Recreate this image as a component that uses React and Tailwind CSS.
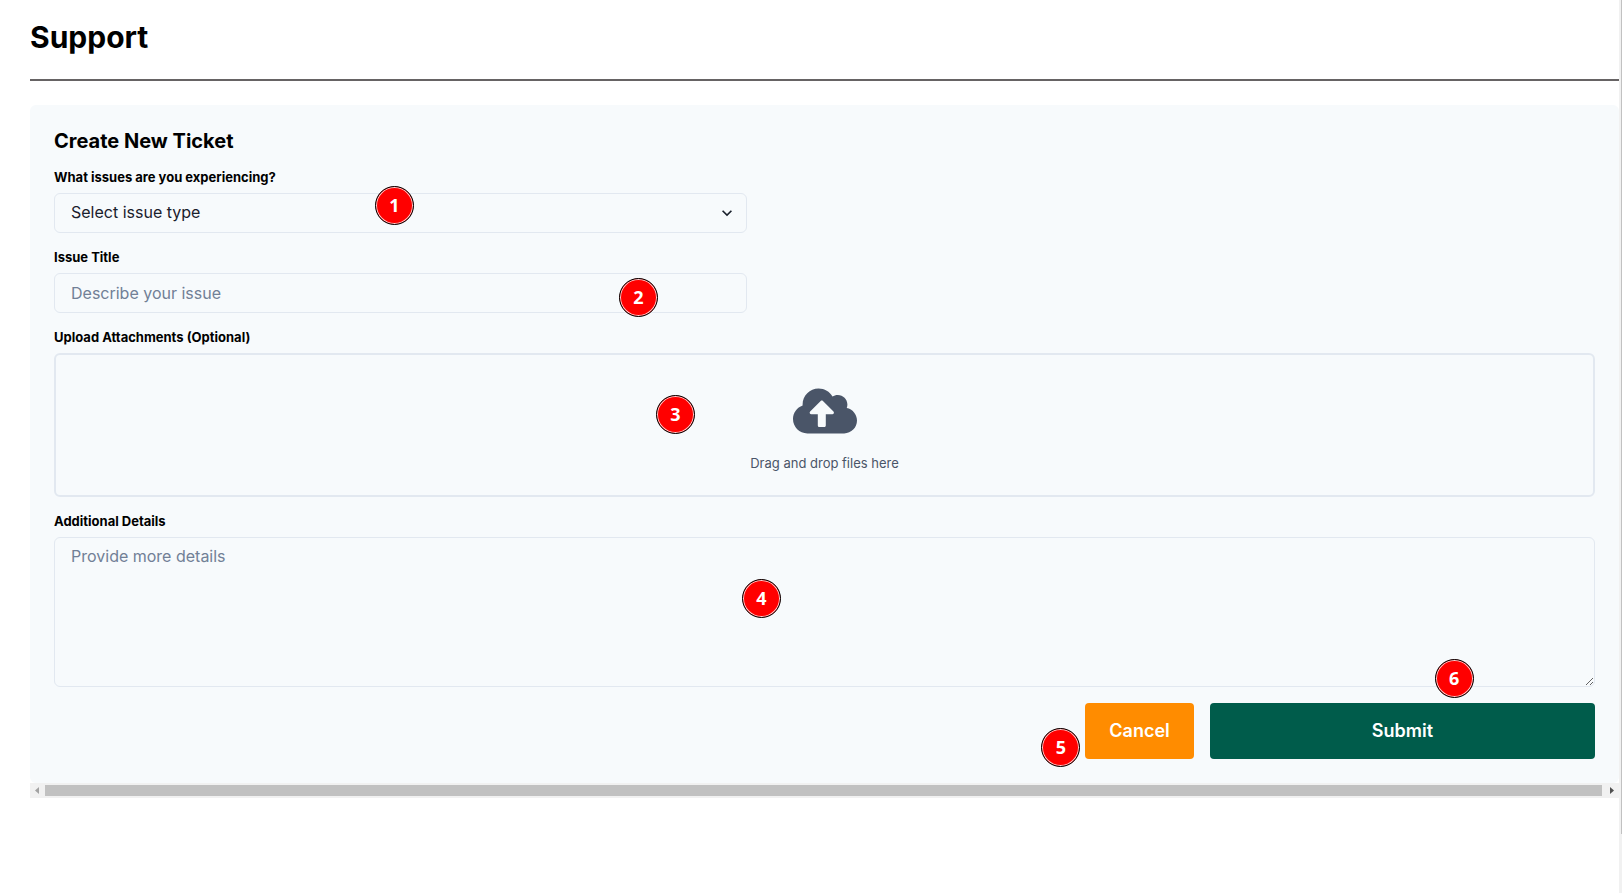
import { FaCloudUploadAlt } from "react-icons/fa";

function Marker({ n, className }) {
  return (
    <span
      className={`pointer-events-none absolute z-10 flex size-[39px] items-center justify-center rounded-full border border-black bg-[#ff0000] pb-0.5 font-['Noto_Sans',sans-serif] text-lg leading-none font-bold text-white ring-1 ring-white/80 ring-inset ${className}`}
    >
      {n}
    </span>
  );
}

function Field({ id, label, className = "", children }) {
  return (
    <div className={`flex flex-col gap-1.5 ${className}`}>
      <label htmlFor={id} className="self-start text-[13px] leading-5 font-bold">
        {label}
      </label>
      {children}
    </div>
  );
}

function HorizontalScrollbar() {
  return (
    <div aria-hidden="true" className="flex h-[15px] items-center bg-[#f1f1f1]">
      <svg viewBox="0 0 15 15" className="size-[15px] shrink-0">
        <path d="M9 4v7L5 7.5z" fill="#a3a3a3" />
      </svg>
      <div className="h-[11px] grow bg-[#c1c1c1]" />
      <svg viewBox="0 0 17 15" className="h-[15px] w-[17px] shrink-0">
        <path d="M8 4v7l4-3.5z" fill="#505050" />
      </svg>
    </div>
  );
}

export default function App() {
  return (
    <div className="flex min-h-screen bg-white font-[Inter,sans-serif] text-black">
      <main className="min-w-0 grow pl-[30px]">
        <h1 className="pt-[19px] pb-6 text-3xl leading-9 font-bold">Support</h1>
        <hr className="border-t-2 border-[#666364]" />
        <section className="mt-6 bg-[#f1f1f1]">
          <div className="bg-white">
            <form
              className="flex flex-col gap-3.5 rounded-md bg-[#f7fafc] p-6"
              onSubmit={(e) => e.preventDefault()}
            >
              <h2 className="text-xl leading-6 font-bold">Create New Ticket</h2>

              <Field id="issue-type" label="What issues are you experiencing?" className="w-[45%]">
                <div className="relative">
                  <select
                    id="issue-type"
                    className="block h-10 w-full appearance-none rounded-md border border-[#e2e8f0] bg-transparent px-4 pb-0.5 text-base text-[#1a202c]"
                  >
                    <option>Select issue type</option>
                  </select>
                  <svg
                    viewBox="0 0 24 24"
                    className="pointer-events-none absolute top-2.5 right-2.5 size-5 text-[#1a202c]"
                  >
                    <path fill="currentColor" d="M16.59 8.59L12 13.17 7.41 8.59 6 10l6 6 6-6z" />
                  </svg>
                  <Marker n={1} className="top-[-7px] left-[321px]" />
                </div>
              </Field>

              <Field id="issue-title" label="Issue Title" className="w-[45%]">
                <div className="relative">
                  <input
                    id="issue-title"
                    type="text"
                    placeholder="Describe your issue"
                    className="block h-10 w-full rounded-md border border-[#e2e8f0] bg-transparent px-4 text-base placeholder:text-[#718096]"
                  />
                  <Marker n={2} className="top-[5px] left-[565px]" />
                </div>
              </Field>

              <Field id="attachments" label="Upload Attachments (Optional)">
                <div className="relative flex h-36 flex-col items-center rounded-md border-2 border-[#e2e8f0] pt-6">
                  <FaCloudUploadAlt className="size-16 text-[#4a5568]" />
                  <p className="mt-2.5 text-[13px] leading-5 text-[#4a5568]">Drag and drop files here</p>
                  <input
                    id="attachments"
                    type="file"
                    multiple
                    className="absolute inset-0 size-full cursor-pointer opacity-0"
                  />
                  <Marker n={3} className="top-10 left-[600px]" />
                </div>
              </Field>

              <Field id="details" label="Additional Details">
                <div className="relative">
                  <textarea
                    id="details"
                    placeholder="Provide more details"
                    className="block h-[150px] w-full resize-y rounded-md border border-[#e2e8f0] bg-transparent px-4 py-2 text-base leading-5 placeholder:text-[#718096]"
                  />
                  <Marker n={4} className="top-[42px] left-[688px]" />
                </div>
              </Field>

              <div className="mt-0.5 flex justify-end gap-4">
                <button
                  type="button"
                  className="relative h-14 rounded bg-[#ff8c00] px-6 text-lg font-semibold text-white"
                >
                  Cancel
                  <Marker n={5} className="top-[25px] right-full mr-[5px]" />
                </button>
                <button
                  type="submit"
                  className="relative h-14 w-1/4 rounded bg-[#005c4b] text-lg font-semibold text-white"
                >
                  Submit
                  <Marker n={6} className="-top-11 left-[225px]" />
                </button>
              </div>
            </form>
          </div>
          <HorizontalScrollbar />
        </section>
      </main>
      <div aria-hidden="true" className="flex w-[3px] shrink-0 items-start justify-end bg-[#f1f1f1]">
        <div className="h-[834px] w-px bg-[#c1c1c1]" />
      </div>
    </div>
  );
}
